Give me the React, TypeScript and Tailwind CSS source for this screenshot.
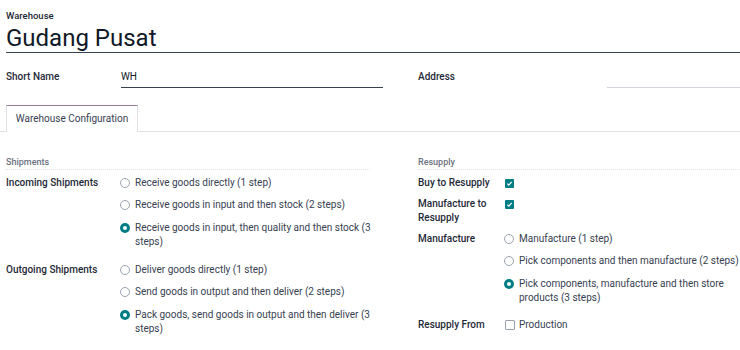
import React from "react";

const Radio = ({ checked }: { checked?: boolean }) =>
  checked ? (
    <span className="mt-[2px] flex h-[10px] w-[10px] shrink-0 items-center justify-center rounded-full bg-[#017e84]">
      <span className="h-[4px] w-[4px] rounded-full bg-white" />
    </span>
  ) : (
    <span className="mt-[2px] h-[10px] w-[10px] shrink-0 rounded-full border border-[#9ca3af] bg-white" />
  );

const Check = ({ checked }: { checked?: boolean }) =>
  checked ? (
    <span className="mt-[2.5px] flex h-[9px] w-[9px] shrink-0 items-center justify-center rounded-[1px] bg-[#017e84]">
      <svg width="7" height="7" viewBox="0 0 8 8">
        <path d="M1.5 4.2 L3.2 5.8 L6.5 2.2" stroke="white" strokeWidth="1.4" fill="none" />
      </svg>
    </span>
  ) : (
    <span className="mt-[2px] h-[10px] w-[10px] shrink-0 rounded-[1px] border border-[#9ca3af] bg-white" />
  );

const Option = ({
  checked,
  lines,
  className = "",
}: {
  checked?: boolean;
  lines: string[];
  className?: string;
}) => (
  <div className={`flex items-start gap-[5px] ${className}`}>
    <Radio checked={checked} />
    <div className="whitespace-nowrap leading-[14px] text-[#374151]">
      {lines.map((l, i) => (
        <div key={i}>{l}</div>
      ))}
    </div>
  </div>
);

export default function App() {
  return (
    <div className="relative h-[350px] w-[740px] overflow-hidden bg-white font-['Roboto',sans-serif] text-[10px] text-[#374151]">
      <div className="pl-[6px] pt-[10px]">
        <div className="text-[9.5px] font-medium leading-[11px] text-[#1f2937]">Warehouse</div>
        <div className="mt-[3px] h-[29px] border-b border-[#374151] text-[24px] leading-[28px] text-[#111827]">
          Gudang Pusat
        </div>
        <div className="mt-[17px] flex">
          <div className="flex w-[377px]">
            <div className="w-[115px] font-medium leading-[14px] text-[#1f2937]">Short Name</div>
            <div className="h-[18px] w-[262px] border-b border-[#374151] leading-[14px] text-[#111827]">WH</div>
          </div>
          <div className="ml-[35px] flex flex-1">
            <div className="w-[189px] font-medium leading-[14px] text-[#1f2937]">Address</div>
            <div className="h-[18px] flex-1 border-b border-[#d1d5db]" />
          </div>
        </div>
      </div>

      <div className="mt-[17px] flex h-[27px] border-b border-[#dee2e6]">
        <div className="mb-[-1px] ml-[6px] flex h-[27px] w-[132px] items-center justify-center border-x border-t border-x-[#dee2e6] border-t-[#9a7d93] bg-white leading-[14px] text-[#374151]">
          Warehouse Configuration
        </div>
      </div>

      <div className="flex pl-[6px] pt-[25px]">
        <div className="w-[377px]">
          <div className="mr-[13px] border-b border-dotted border-[#e5e7eb] pb-[1px] text-[9px] font-medium leading-[11px] text-[#6b7280]">
            Shipments
          </div>
          <div className="mt-[6px] flex">
            <div className="w-[114px] font-medium leading-[14px] text-[#1f2937]">Incoming Shipments</div>
            <div className="flex flex-col">
              <Option lines={["Receive goods directly (1 step)"]} />
              <Option className="mt-[8px]" lines={["Receive goods in input and then stock (2 steps)"]} />
              <Option
                className="mt-[9px]"
                checked
                lines={["Receive goods in input, then quality and then stock (3", "steps)"]}
              />
            </div>
          </div>
          <div className="mt-[14px] flex">
            <div className="w-[114px] font-medium leading-[14px] text-[#1f2937]">Outgoing Shipments</div>
            <div className="flex flex-col">
              <Option lines={["Deliver goods directly (1 step)"]} />
              <Option className="mt-[8px]" lines={["Send goods in output and then deliver (2 steps)"]} />
              <Option
                className="mt-[9px]"
                checked
                lines={["Pack goods, send goods in output and then deliver (3", "steps)"]}
              />
            </div>
          </div>
        </div>

        <div className="ml-[35px] flex-1">
          <div className="border-b border-dotted border-[#e5e7eb] pb-[1px] text-[9px] font-medium leading-[11px] text-[#6b7280]">
            Resupply
          </div>
          <div className="mt-[6px] flex">
            <div className="w-[87px] font-medium leading-[14px] text-[#1f2937]">Buy to Resupply</div>
            <Check checked />
          </div>
          <div className="mt-[7px] flex">
            <div className="w-[87px] font-medium leading-[14px] text-[#1f2937]">
              Manufacture to
              <br />
              Resupply
            </div>
            <Check checked />
          </div>
          <div className="mt-[7px] flex">
            <div className="w-[86px] font-medium leading-[14px] text-[#1f2937]">Manufacture</div>
            <div className="flex flex-col">
              <Option lines={["Manufacture (1 step)"]} />
              <Option className="mt-[8px]" lines={["Pick components and then manufacture (2 steps)"]} />
              <Option
                className="mt-[9px]"
                checked
                lines={["Pick components, manufacture and then store", "products (3 steps)"]}
              />
            </div>
          </div>
          <div className="mt-[13px] flex">
            <div className="w-[87px] font-medium leading-[14px] text-[#1f2937]">Resupply From</div>
            <div className="flex items-start gap-[4px]">
              <Check />
              <div className="leading-[14px] text-[#374151]">Production</div>
            </div>
          </div>
        </div>
      </div>
    </div>
  );
}
